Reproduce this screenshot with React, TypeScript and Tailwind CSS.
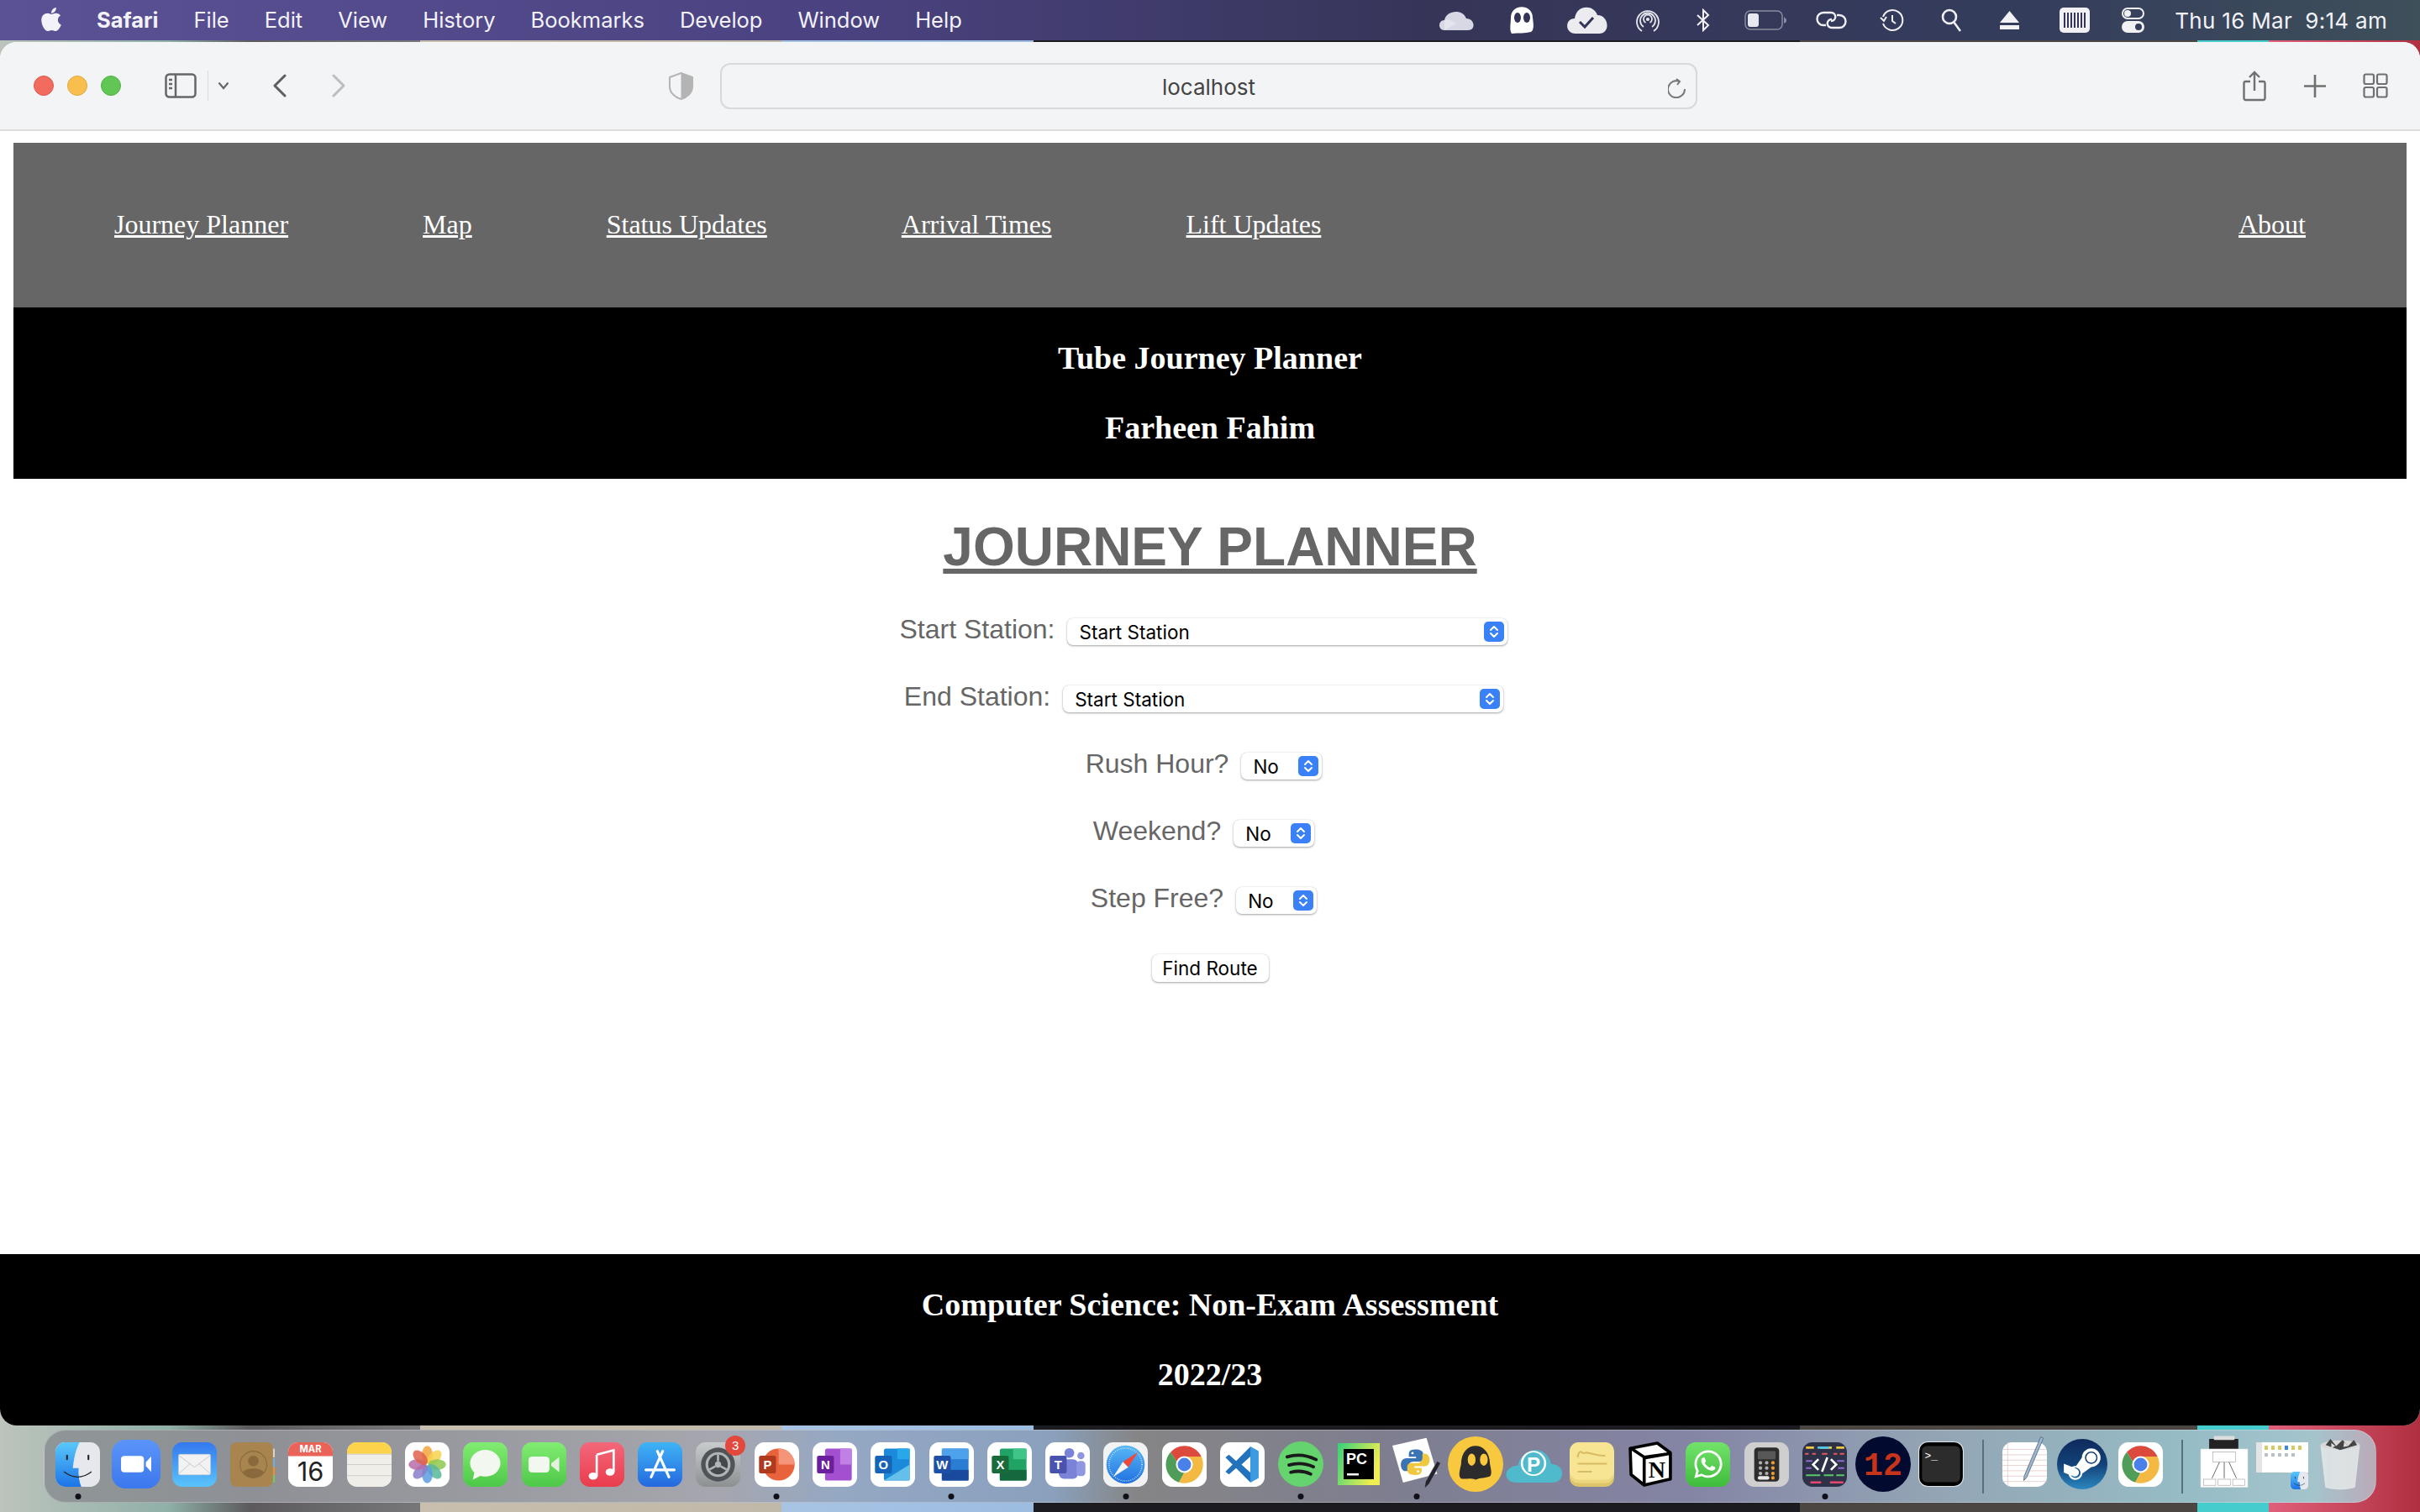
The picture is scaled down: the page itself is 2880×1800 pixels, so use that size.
import React from 'react';
import { FaApple, FaWhatsapp, FaSteamSymbol } from 'react-icons/fa';

const menuItems = ['File', 'Edit', 'View', 'History', 'Bookmarks', 'Develop', 'Window', 'Help'];
const navLinks = ['Journey Planner', 'Map', 'Status Updates', 'Arrival Times', 'Lift Updates'];

// Shared svg bits
const Grad = ({ id, a, b, x2 = 0, y2 = 1 }: { id: string; a: string; b: string; x2?: number; y2?: number }) => (
  <defs>
    <linearGradient id={id} x1="0" y1="0" x2={x2} y2={y2}>
      <stop offset="0" stopColor={a} />
      <stop offset="1" stopColor={b} />
    </linearGradient>
  </defs>
);

const Tile = ({ fill = '#fff' }: { fill?: string }) => <rect width="100" height="100" rx="22" fill={fill} />;

const Icon = ({ size = 53, h, children }: { size?: number; h?: number; children: React.ReactNode }) => (
  <svg width={size} height={h ?? size} viewBox="0 0 100 100" preserveAspectRatio="none" className="block overflow-visible">
    {children}
  </svg>
);

const Finder = ({ size = 53 }: { size?: number }) => (
  <Icon size={size}>
    <Grad id={`finder${size}`} a="#5ac8fa" b="#1c74e6" />
    <Tile fill="#e6e8ee" />
    <path d="M22 0H54C44 20 41 40 39 58H52C51 72 53 88 58 100H22A22 22 0 0 1 0 78V22A22 22 0 0 1 22 0Z" fill={`url(#finder${size})`} />
    <rect x="24" y="28" width="4" height="12" rx="2" fill="#222" />
    <rect x="72" y="28" width="4" height="12" rx="2" fill="#222" />
    <path d="M19 66Q50 90 81 66" fill="none" stroke="#222" strokeWidth="2.5" />
  </Icon>
);

const Chrome = () => (
  <Icon>
    <Tile />
    <path d="M50 8A42 42 0 0 1 88 32H50A18 18 0 0 0 33 44L19 22A42 42 0 0 1 50 8Z" fill="#db4a3c" />
    <path d="M19 22L33 44A18 18 0 0 0 50 68L38 90A42 42 0 0 1 19 22Z" fill="#4f9d58" />
    <path d="M88 32A42 42 0 0 1 38 90L50 68A18 18 0 0 0 66 42L50 32Z" fill="#f4b942" />
    <circle cx="50" cy="50" r="19" fill="#fff" />
    <circle cx="50" cy="50" r="15" fill="#4a80ea" />
  </Icon>
);

const Office = ({ letter, square, children }: { letter: string; square: string; children: React.ReactNode }) => (
  <Icon>
    <Tile />
    {children}
    <rect x="10" y="30" width="38" height="40" rx="4" fill={square} />
    <text x="29" y="60" textAnchor="middle" fontSize="28" fontWeight="700" fill="#fff" fontFamily="Liberation Sans, sans-serif">{letter}</text>
  </Icon>
);

const Pen = ({ x = 0, y = 0 }: { x?: number; y?: number }) => (
  <g transform={`translate(${x} ${y})`}>
    <path d="M44 0L50 3L12 92L6 98L7 88Z" fill="#9cb8d4" stroke="#506070" strokeWidth="1.5" />
  </g>
);

const SNAKE = 'M50 22C36 22 34 28 34 34V40H52V44H28C18 44 14 52 14 60C14 68 18 76 26 76H32V66C32 58 38 52 46 52H60C66 52 70 48 70 42V34C70 26 62 22 50 22Z';

const dockItems: { key: string; dot?: boolean; badge?: string; icon: React.ReactNode }[] = [
  { key: 'finder', dot: true, icon: <Finder /> },
  {
    key: 'zoom',
    icon: (
      <Icon size={58}>
        <Grad id="zoom" a="#5b94f8" b="#3c78ee" />
        <rect width="100" height="100" rx="28" fill="url(#zoom)" />
        <rect x="19" y="33" width="47" height="34" rx="7" fill="#fff" />
        <path d="M70 46L81 34V66L70 54Z" fill="#fff" />
      </Icon>
    ),
  },
  {
    key: 'mail',
    icon: (
      <Icon>
        <Grad id="mail" a="#3478ee" b="#5ac4fb" />
        <Tile fill="url(#mail)" />
        <rect x="14" y="27" width="72" height="46" rx="3" fill="#f2f2f2" stroke="#c8c8c8" />
        <path d="M14 29L50 56L86 29M14 71L40 48M86 71L60 48" fill="none" stroke="#bdbdbd" strokeWidth="1.5" />
      </Icon>
    ),
  },
  {
    key: 'contacts',
    icon: (
      <Icon>
        <rect x="88" y="14" width="12" height="20" rx="2" fill="#d8d4cc" />
        <rect x="88" y="36" width="12" height="20" rx="2" fill="#6ab0ec" />
        <rect x="88" y="56" width="12" height="18" rx="2" fill="#ee9030" />
        <rect x="88" y="74" width="12" height="16" rx="2" fill="#78c868" />
        <rect width="96" height="100" rx="14" fill="#a8844f" />
        <circle cx="52" cy="50" r="30" fill="none" stroke="#8a6a3c" strokeWidth="2" />
        <circle cx="52" cy="42" r="12" fill="#8a6a3c" />
        <path d="M28 68C34 56 70 56 76 68A30 30 0 0 1 28 68Z" fill="#8a6a3c" />
      </Icon>
    ),
  },
  {
    key: 'calendar',
    icon: (
      <Icon>
        <Tile />
        <path d="M22 0H78A22 22 0 0 1 100 22V31H0V22A22 22 0 0 1 22 0Z" fill="#ea6358" />
        <text x="50" y="23" textAnchor="middle" fontSize="21" fontWeight="700" fill="#fff" fontFamily="Inter, sans-serif">MAR</text>
        <text x="50" y="86" textAnchor="middle" fontSize="58" fill="#222" fontFamily="Inter, sans-serif">16</text>
      </Icon>
    ),
  },
  {
    key: 'notes',
    icon: (
      <Icon>
        <Tile fill="#f0eee8" />
        <path d="M22 0H78A22 22 0 0 1 100 22V26H0V22A22 22 0 0 1 22 0Z" fill="#fdd34c" />
        <path d="M0 27H100M0 50H100M0 75H100" stroke="#d0cec8" strokeWidth="2" />
      </Icon>
    ),
  },
  {
    key: 'photos',
    icon: (
      <Icon>
        <Tile />
        {['#f2a53c', '#f6d24c', '#8ec850', '#58b898', '#5a9ce0', '#8a7cc8', '#b86ca8', '#e0604c'].map((c, i) => (
          <ellipse key={c} cx="50" cy="28" rx="12" ry="20" fill={c} opacity="0.85" transform={`rotate(${i * 45} 50 50)`} />
        ))}
      </Icon>
    ),
  },
  {
    key: 'messages',
    icon: (
      <Icon>
        <Grad id="msg" a="#82ec72" b="#4dc848" />
        <Tile fill="url(#msg)" />
        <ellipse cx="50" cy="47" rx="34" ry="30" fill="#f2f8f0" />
        <path d="M26 66L22 84L42 74Z" fill="#f2f8f0" />
      </Icon>
    ),
  },
  {
    key: 'facetime',
    icon: (
      <Icon>
        <Grad id="ft" a="#82ec72" b="#4dc848" />
        <Tile fill="url(#ft)" />
        <rect x="15" y="32" width="47" height="36" rx="8" fill="#f2f8f0" />
        <path d="M66 47L84 33V67L66 53Z" fill="#e4f0e0" />
      </Icon>
    ),
  },
  {
    key: 'music',
    icon: (
      <Icon>
        <Grad id="music" a="#f2687a" b="#ea3c4c" />
        <Tile fill="url(#music)" />
        <path d="M38 28L76 18V66" fill="none" stroke="#fff" strokeWidth="5" />
        <path d="M38 28V76" fill="none" stroke="#fff" strokeWidth="5" />
        <ellipse cx="30" cy="76" rx="10" ry="8" fill="#fff" />
        <ellipse cx="68" cy="67" rx="10" ry="8" fill="#fff" />
      </Icon>
    ),
  },
  {
    key: 'appstore',
    icon: (
      <Icon>
        <Grad id="as" a="#3fb4f6" b="#2468de" />
        <Tile fill="url(#as)" />
        <path d="M56 20L30 78M44 20L70 78M18 62H82" fill="none" stroke="#fff" strokeWidth="6" strokeLinecap="round" />
      </Icon>
    ),
  },
  {
    key: 'prefs',
    badge: '3',
    icon: (
      <Icon>
        <Grad id="sp" a="#c8cccc" b="#8c9090" />
        <Tile fill="url(#sp)" />
        <circle cx="50" cy="50" r="38" fill="#505458" />
        <circle cx="50" cy="50" r="28" fill="#b0b4b4" />
        <circle cx="50" cy="50" r="22" fill="#44484c" />
        <circle cx="50" cy="50" r="7" fill="#b0b4b4" />
        <path d="M50 28V43M31 61L44 54M69 61L56 54" stroke="#b0b4b4" strokeWidth="5" />
      </Icon>
    ),
  },
  {
    key: 'powerpoint',
    dot: true,
    icon: (
      <Office letter="P" square="#b03a1e">
        <circle cx="54" cy="50" r="36" fill="#e8623c" />
        <path d="M54 14A36 36 0 0 1 90 50H54Z" fill="#f49478" />
      </Office>
    ),
  },
  {
    key: 'onenote',
    icon: (
      <Office letter="N" square="#6c1f9c">
        <rect x="28" y="14" width="60" height="72" rx="5" fill="#a24fd0" />
        <rect x="62" y="14" width="26" height="36" fill="#c080e4" />
      </Office>
    ),
  },
  {
    key: 'outlook',
    icon: (
      <Office letter="O" square="#1464b8">
        <rect x="30" y="14" width="58" height="72" rx="5" fill="#1c8ada" />
        <rect x="60" y="14" width="28" height="24" fill="#28a8e8" />
        <path d="M30 86L88 50V86Z" fill="#64c0ea" />
      </Office>
    ),
  },
  {
    key: 'word',
    dot: true,
    icon: (
      <Office letter="W" square="#1f50a8">
        <rect x="28" y="14" width="60" height="72" rx="5" fill="#2b7cd3" />
        <rect x="28" y="14" width="60" height="24" fill="#4ea2ec" />
        <rect x="28" y="62" width="60" height="24" fill="#1a4a9c" />
      </Office>
    ),
  },
  {
    key: 'excel',
    icon: (
      <Office letter="X" square="#1a6b3c">
        <rect x="28" y="14" width="60" height="72" rx="5" fill="#21a366" />
        <rect x="58" y="14" width="30" height="24" fill="#40c488" />
        <rect x="28" y="62" width="60" height="24" fill="#15683e" />
      </Office>
    ),
  },
  {
    key: 'teams',
    icon: (
      <Office letter="T" square="#4a52b0">
        <circle cx="54" cy="24" r="11" fill="#7b83d8" />
        <circle cx="80" cy="30" r="8" fill="#8f97e0" />
        <rect x="30" y="38" width="44" height="44" rx="12" fill="#7b83d8" />
        <rect x="70" y="42" width="20" height="34" rx="8" fill="#8f97e0" />
      </Office>
    ),
  },
  {
    key: 'safari',
    dot: true,
    icon: (
      <Icon>
        <Grad id="sf" a="#58b8f6" b="#1f70e0" />
        <Tile fill="#f2f2f2" />
        <circle cx="50" cy="50" r="43" fill="url(#sf)" />
        <circle cx="50" cy="50" r="37" fill="none" stroke="#d8ecfc" strokeWidth="3" strokeDasharray="1.5 3" />
        <path d="M78 22L44 44L56 56Z" fill="#f04838" />
        <path d="M22 78L44 44L56 56Z" fill="#f4f4f4" />
      </Icon>
    ),
  },
  { key: 'chrome', icon: <Chrome /> },
  {
    key: 'vscode',
    icon: (
      <Icon>
        <Tile />
        <path d="M68 10L86 20V80L68 90L36 58L20 72L12 66L28 50L12 34L20 28L36 42ZM68 32L48 50L68 68Z" fill="#2272bc" fillRule="evenodd" />
        <path d="M68 10L86 20V80L68 90Z" fill="#3c9ae0" />
      </Icon>
    ),
  },
  {
    key: 'spotify',
    dot: true,
    icon: (
      <Icon size={54}>
        <circle cx="50" cy="50" r="50" fill="#65d46e" />
        <path d="M20 34Q52 24 84 40M24 52Q52 44 78 56M28 68Q52 62 72 72" fill="none" stroke="#1a1a1a" strokeWidth="7" strokeLinecap="round" />
      </Icon>
    ),
  },
  {
    key: 'pycharm',
    icon: (
      <Icon size={50}>
        <Grad id="pc" a="#35d07a" b="#f0ee50" x2={1} y2={0.4} />
        <rect width="100" height="100" fill="url(#pc)" />
        <rect x="14" y="14" width="72" height="72" fill="#000" />
        <text x="20" y="50" fontSize="36" fontWeight="700" fill="#fff" fontFamily="Liberation Sans, sans-serif">PC</text>
        <rect x="22" y="72" width="28" height="5" fill="#fff" />
      </Icon>
    ),
  },
  {
    key: 'python',
    dot: true,
    icon: (
      <Icon size={58}>
        <path d="M0 12L70 -4L92 70L22 88Z" fill="#fff" />
        <g transform="translate(6 2) scale(0.82)">
          <path d={SNAKE} fill="#3b74b4" />
          <path d={SNAKE} fill="#f0c840" transform="rotate(180 50 54)" />
          <circle cx="43" cy="31" r="3" fill="#fff" />
          <circle cx="57" cy="77" r="3" fill="#fff" />
        </g>
        <path d="M92 44L99 48L76 90L66 100L68 86Z" fill="#23232e" stroke="#8c8c94" strokeWidth="1" />
      </Icon>
    ),
  },
  {
    key: 'cyberghost',
    icon: (
      <Icon size={66}>
        <circle cx="50" cy="50" r="50" fill="#f8c93e" />
        <path d="M24 50C24 6 76 6 76 50C78 60 80 68 76 72C66 76 60 74 50 78C40 74 30 78 24 76C18 72 22 60 24 50Z" fill="#2c2c2c" />
        <ellipse cx="43" cy="42" rx="7" ry="11" fill="#f8c93e" />
        <ellipse cx="65" cy="42" rx="7" ry="11" fill="#f8c93e" />
      </Icon>
    ),
  },
  {
    key: 'pcloud',
    icon: (
      <Icon size={66} h={44}>
        <path d="M20 100C-6 100 -6 56 22 54C26 10 72 -12 82 50C108 50 108 100 84 100Z" fill="#4fbacc" />
        <ellipse cx="50" cy="48" rx="21" ry="32" fill="none" stroke="#fff" strokeWidth="4" />
        <text x="50" y="70" textAnchor="middle" fontSize="54" fontWeight="700" fill="#fff" fontFamily="Liberation Sans, sans-serif" transform="translate(16 0) scale(0.68 1)">P</text>
      </Icon>
    ),
  },
  {
    key: 'stickies',
    icon: (
      <Icon>
        <rect y="12" width="100" height="88" rx="20" fill="#dcc46a" />
        <rect y="6" width="100" height="86" rx="20" fill="#ecd67e" />
        <rect width="100" height="84" rx="20" fill="#f8e594" />
        <path d="M18 34C22 10 28 28 34 24C42 20 56 32 80 30M18 48H84M18 66H50" fill="none" stroke="#d8bc64" strokeWidth="4" />
      </Icon>
    ),
  },
  {
    key: 'notion',
    icon: (
      <Icon size={52}>
        <path d="M4 14L66 2L96 24V84L36 98L6 74Z" fill="#fff" stroke="#000" strokeWidth="7" strokeLinejoin="round" />
        <path d="M6 14L36 34L94 26L36 36V96" fill="none" stroke="#000" strokeWidth="7" />
        <text x="65" y="80" textAnchor="middle" fontSize="54" fontWeight="700" fill="#000" fontFamily="Liberation Serif, serif">N</text>
      </Icon>
    ),
  },
  {
    key: 'whatsapp',
    icon: (
      <div className="flex h-[53px] w-[53px] items-center justify-center rounded-xl bg-linear-to-b from-[#72e36a] to-[#3fbc3c] text-[38px] text-white">
        <FaWhatsapp />
      </div>
    ),
  },
  {
    key: 'calculator',
    icon: (
      <Icon>
        <Tile fill="#cfcfcf" />
        <rect x="22" y="12" width="56" height="76" rx="8" fill="#2c2c2c" />
        <rect x="30" y="20" width="40" height="18" rx="2" fill="#585858" />
        {[46, 58, 70].map(y => (
          <g key={y}>
            <circle cx="36" cy={y} r="4" fill="#b0b0b0" />
            <circle cx="50" cy={y} r="4" fill="#b0b0b0" />
            <circle cx="64" cy={y} r="4" fill="#f09a30" />
          </g>
        ))}
        <rect x="30" y="76" width="26" height="8" rx="4" fill="#e8e8e8" />
        <circle cx="64" cy="80" r="4" fill="#f09a30" />
      </Icon>
    ),
  },
  {
    key: 'codeeditor',
    dot: true,
    icon: (
      <Icon>
        <Tile fill="#2e3248" />
        <path d="M8 12H26M40 12H66M76 12H94" stroke="#f0c840" strokeWidth="5" />
        <path d="M34 12H60" stroke="#4cc8f0" strokeWidth="5" />
        <path d="M6 26H14M22 26H30M44 26H56M70 26H78M84 26H94" stroke="#e85858" strokeWidth="4" />
        <path d="M8 42H22M78 42H94M8 58H20M80 58H94" stroke="#9068d0" strokeWidth="4" />
        <path d="M8 74H40M48 74H70M76 74H94" stroke="#58c868" strokeWidth="4" />
        <path d="M18 90H42M62 90H92" stroke="#e84870" strokeWidth="5" />
        <path d="M36 38L24 50L36 62M64 38L76 50L64 62M56 34L44 66" fill="none" stroke="#fff" strokeWidth="5" />
      </Icon>
    ),
  },
  {
    key: 'clock',
    icon: (
      <Icon size={66}>
        <circle cx="50" cy="50" r="50" fill="#020a30" />
        <text x="50" y="70" textAnchor="middle" fontSize="58" fontWeight="700" fill="#c8341a" fontFamily="Liberation Mono, monospace">12</text>
      </Icon>
    ),
  },
  {
    key: 'terminal',
    icon: (
      <Icon size={54}>
        <rect x="1" y="1" width="98" height="98" rx="20" fill="#000" stroke="#dfe6ea" strokeWidth="2" />
        <rect x="8" y="10" width="84" height="80" rx="10" fill="#2c2c2c" />
        <text x="14" y="38" fontSize="24" fill="#fff" fontFamily="Liberation Mono, monospace">&gt;_</text>
      </Icon>
    ),
  },
  { key: 'sep1', icon: null },
  {
    key: 'textedit',
    icon: (
      <Icon>
        <Tile />
        {[16, 28, 40, 52, 64, 76, 88].map(y => (
          <path key={y} d={`M0 ${y}H100`} stroke="#e4c8c8" strokeWidth="1.5" />
        ))}
        <path d="M12 0V100" stroke="#e4c8c8" strokeWidth="1.5" />
        <Pen x={42} y={-12} />
      </Icon>
    ),
  },
  {
    key: 'steam',
    icon: (
      <div className="flex h-[60px] w-[60px] items-center justify-center rounded-full bg-linear-to-b from-[#0e2a5c] via-[#124278] to-[#2c88c0] text-[50px] text-white">
        <FaSteamSymbol />
      </div>
    ),
  },
  { key: 'chrome2', icon: <Chrome /> },
  { key: 'sep2', icon: null },
  {
    key: 'stack1',
    icon: (
      <Icon size={56} h={60}>
        <rect x="18" y="0" width="62" height="30" fill="#222" />
        <rect x="28" y="-6" width="44" height="8" rx="2" fill="#ddd" />
        <rect x="0" y="20" width="100" height="76" fill="#fff" stroke="#ddd" />
        <rect x="26" y="26" width="48" height="20" fill="none" stroke="#999" />
        <path d="M40 46L24 78M50 46V78M60 46L76 78" stroke="#555" strokeWidth="1.5" />
        <rect x="6" y="80" width="26" height="12" fill="none" stroke="#999" />
        <rect x="37" y="80" width="26" height="12" fill="none" stroke="#999" />
        <rect x="68" y="80" width="26" height="12" fill="none" stroke="#999" />
      </Icon>
    ),
  },
  {
    key: 'stack2',
    icon: (
      <div className="relative h-[60px] w-[62px]">
        <svg width="62" height="36" viewBox="0 0 62 36" className="absolute top-[4px] left-0">
          <rect width="62" height="36" fill="#fff" />
          <rect width="7" height="36" fill="#e4e4e4" />
          {[10, 18, 26, 34, 42, 50].map(x => (
            <rect key={x} x={x} y="4" width="4" height="5" fill={x === 34 ? '#3c8ae0' : '#d8c860'} />
          ))}
          {[10, 18, 26, 34, 42].map(x => (
            <rect key={x} x={x} y="13" width="4" height="4" fill="#b8c0c8" />
          ))}
        </svg>
        <div className="absolute right-0 bottom-0">
          <Finder size={21} />
        </div>
      </div>
    ),
  },
  {
    key: 'trash',
    icon: (
      <Icon size={48} h={60}>
        <path d="M2 12L14 96Q50 104 86 96L98 12Z" fill="#e4e8e8" fillOpacity="0.85" stroke="#f4f4f4" />
        <ellipse cx="50" cy="12" rx="48" ry="9" fill="#d8d8d8" />
        <path d="M14 12L26 0L40 14L56 2L70 14L84 2L92 12L50 22Z" fill="#444" />
        <path d="M28 8L38 14L28 18ZM60 6L70 14L58 16Z" fill="#ddd" />
      </Icon>
    ),
  },
];

const Chevrons = () => (
  <svg width="24" height="24" viewBox="0 0 24 24" className="absolute top-1 right-1 rounded-[5px] bg-[#3a80f7]">
    <path d="M8 10L12 6L16 10M8 14L12 18L16 14" fill="none" stroke="#fff" strokeWidth="2" strokeLinecap="round" strokeLinejoin="round" />
  </svg>
);

const FormRow = ({ label, value, width }: { label: string; value: string; width: string }) => (
  <div className="flex h-8 items-center justify-center gap-[15px] pr-[15px]">
    <label className="-translate-y-[3px] text-[32px] leading-8 text-[#666]">{label}</label>
    <div className={`relative h-8 ${width} rounded-[7px] bg-white shadow-[0_1px_2.5px_rgba(0,0,0,0.35),0_0_1px_rgba(0,0,0,0.2)]`}>
      <select className="h-8 w-full appearance-none bg-transparent pl-[14px] font-['Inter',sans-serif] text-[22.5px] text-black outline-none">
        <option>{value}</option>
      </select>
      <Chevrons />
    </div>
  </div>
);

const BlackBand = ({ lines }: { lines: string[] }) => (
  <div className="flow-root bg-black text-center font-['Liberation_Serif',serif] text-white">
    {lines.map(line => (
      <h3 key={line} className="my-[38px] text-[38px] leading-[45px] font-bold">{line}</h3>
    ))}
  </div>
);

export default function App() {
  return (
    <div className="relative flex h-[1800px] w-[2880px] flex-col overflow-hidden bg-[linear-gradient(90deg,#bcc4bc_0,#8fb0a8_200px,#5c5a5c_297px,#77777a_500px,#c8bfae_500px,#c0b8a8_930px,#a8c4e4_930px,#9cbce0_1230px,#1c1c20_1230px,#1c1c20_2142px,#4c4642_2142px,#4c4642_2615px,#45cccc_2615px,#45cccc_2700px,#e0607c_2700px,#b03040_2880px)] font-['Liberation_Sans',sans-serif]">
      {/* Menu bar */}
      <div className="flex h-[48px] shrink-0 items-center bg-[linear-gradient(90deg,#5b5296_0,#4a4280_1000px,#363558_1700px,#343c5c_2400px,#3e505a_2880px)] pl-[45px] font-['Inter',sans-serif] text-[25.5px] text-[#f2f2f8]">
        <FaApple className="mb-[3px] text-[32px]" />
        <div className="ml-[38px] flex items-center gap-[42px]">
          <span className="font-bold">Safari</span>
          {menuItems.map(item => (
            <span key={item}>{item}</span>
          ))}
        </div>
        <div className="ml-auto flex items-center pr-[39px]">
          <svg width="42" height="28" viewBox="0 0 42 28">
            <path d="M6 26C-2 26 -2 14 6 14C8 2 28 0 32 12C42 12 44 26 34 26Z" fill="#d8d8e4" />
            <path d="M6 14C10 12 14 14 20 18L6 26Z" fill="#ededf2" opacity=".6" />
          </svg>
          <svg width="30" height="34" viewBox="0 0 30 34" className="ml-[41px]">
            <path d="M2 14C2 -3 28 -3 28 14C29 22 30 28 26 31C18 33 12 32 3 33C0 28 2 22 2 14Z" fill="#fff" />
            <ellipse cx="10" cy="14" rx="4" ry="6" fill="#343458" />
            <ellipse cx="21" cy="14" rx="4" ry="6" fill="#343458" />
          </svg>
          <svg width="48" height="32" viewBox="0 0 48 32" className="ml-[39px]">
            <path d="M10 32C-3 32 -3 14 9 14C11 -3 32 -3 36 10C50 10 52 32 38 32Z" fill="#ebebf0" />
            <path d="M15 18L21 24L31 13" fill="none" stroke="#343458" strokeWidth="3" />
          </svg>
          <svg width="28" height="30" viewBox="0 0 28 30" fill="none" stroke="#e8e8f0" strokeWidth="1.8" className="ml-[34px]">
            <path d="M7 28A13 13 0 1 1 21 28M9 23A9 9 0 1 1 19 23M11.5 18A5 5 0 1 1 16.5 18" />
            <circle cx="14" cy="14" r="1.2" fill="#e8e8f0" />
          </svg>
          <svg width="18" height="28" viewBox="0 0 18 28" fill="none" stroke="#f0f0f5" strokeWidth="2" className="ml-[43px]">
            <path d="M2 8L15 20L9 26V2L15 8L2 20" />
          </svg>
          <svg width="50" height="24" viewBox="0 0 50 24" className="ml-[40px]">
            <rect x="1" y="1" width="44" height="22" rx="6" fill="none" stroke="#8a8aa0" strokeWidth="1.5" />
            <rect x="4" y="4" width="13" height="16" rx="3" fill="#e8e8f0" />
            <path d="M47 8L50 11V14L47 16Z" fill="#8a8aa0" />
          </svg>
          <svg width="37" height="24" viewBox="0 0 37 24" fill="none" stroke="#f0f0f5" strokeWidth="2.4" className="ml-[35px]">
            <path d="M12 18H9A7 7 0 0 1 9 3H18C25 3 25 13 18 13" />
            <path d="M25 6H28A7 7 0 0 1 28 21H19C12 21 12 11 19 11" />
          </svg>
          <svg width="29" height="28" viewBox="0 0 29 28" fill="none" stroke="#f0f0f5" strokeWidth="2" className="ml-[39px]">
            <path d="M4 10A12 12 0 1 1 4 18M1 11L5 15L8 10M15 8V15L19 18" />
          </svg>
          <svg width="24" height="28" viewBox="0 0 24 28" fill="none" stroke="#f0f0f5" strokeWidth="2.6" className="ml-[44px]">
            <circle cx="10" cy="10" r="8" />
            <path d="M15 16L23 27" />
          </svg>
          <svg width="23" height="22" viewBox="0 0 23 22" fill="#f0f0f5" className="ml-[46px]">
            <path d="M11.5 0L23 14H0Z" />
            <rect y="17" width="23" height="5" />
          </svg>
          <svg width="36" height="30" viewBox="0 0 36 30" className="ml-[48px]">
            <rect width="36" height="30" rx="5" fill="#f0f0f5" />
            <path d="M6 6V24M10 6V24M14 6V24M18 6V24M22 6V24M26 6V24M30 6V24" stroke="#343458" strokeWidth="2" />
          </svg>
          <svg width="27" height="30" viewBox="0 0 27 30" className="ml-[38px]" fill="none">
            <rect x="1" y="1" width="25" height="12" rx="6" stroke="#f0f0f5" strokeWidth="2" />
            <circle cx="7" cy="7" r="4" fill="#f0f0f5" />
            <rect y="16" width="27" height="14" rx="7" fill="#f0f0f5" />
            <circle cx="20" cy="23" r="4" fill="#343c5c" />
          </svg>
          <span className="ml-[36px] text-[26px] tracking-[0.3px]">Thu 16 Mar&nbsp; 9:14 am</span>
        </div>
      </div>

      {/* Browser window */}
      <div className="mt-[2px] flex h-[1647px] shrink-0 flex-col overflow-hidden rounded-[20px] bg-white">
        <div className="flex h-[106px] shrink-0 items-center border-b-2 border-[#dcdcdc] bg-[#f3f4f6] pl-[40px]">
          <div className="flex gap-4">
            <span className="h-6 w-6 rounded-full border border-[#e0584c] bg-[#f26b5f]" />
            <span className="h-6 w-6 rounded-full border border-[#e0a840] bg-[#f8bf4f]" />
            <span className="h-6 w-6 rounded-full border border-[#50b044] bg-[#62c655]" />
          </div>
          <svg width="38" height="30" viewBox="0 0 38 30" fill="none" stroke="#666" strokeWidth="2.5" className="ml-[52px]">
            <rect x="1.5" y="1.5" width="35" height="27" rx="4" />
            <path d="M13 1.5V28.5M5 8H9M5 13H9M5 18H9" />
          </svg>
          <span className="ml-[13px] h-[36px] w-px bg-[#dcdcdc]" />
          <svg width="14" height="10" viewBox="0 0 14 10" fill="none" stroke="#666" strokeWidth="2.2" className="ml-[11px]">
            <path d="M1.5 1.5L7 8L12.5 1.5" />
          </svg>
          <svg width="18" height="28" viewBox="0 0 18 28" fill="none" stroke="#5e5e5e" strokeWidth="3" strokeLinecap="round" strokeLinejoin="round" className="ml-[51px]">
            <path d="M15 2L3 14L15 26" />
          </svg>
          <svg width="18" height="28" viewBox="0 0 18 28" fill="none" stroke="#bdbdbd" strokeWidth="3" strokeLinecap="round" strokeLinejoin="round" className="ml-[52px]">
            <path d="M3 2L15 14L3 26" />
          </svg>
          <svg width="29" height="33" viewBox="0 0 29 33" className="ml-[384px]">
            <path d="M14.5 1L28 6V17C28 25 21 30 14.5 32C8 30 1 25 1 17V6Z" fill="#f3f4f6" stroke="#b4b4b4" strokeWidth="2" />
            <path d="M14.5 1L28 6V17C28 25 21 30 14.5 32Z" fill="#b4b4b4" />
          </svg>
          <div className="relative ml-[32px] flex h-[55px] w-[1163px] items-center justify-center rounded-[12px] border-2 border-[#d9d9d9] bg-[#f3f4f6] pt-[2px] font-['Inter',sans-serif] text-[26px] text-[#444]">
            localhost
            <svg width="22" height="24" viewBox="0 0 22 24" fill="none" stroke="#777" strokeWidth="2" className="absolute top-[16px] right-[11px]">
              <path d="M14 4A10 10 0 1 0 20 13M10 1L14 4L11 8" />
            </svg>
          </div>
          <svg width="28" height="37" viewBox="0 0 28 37" fill="none" stroke="#707070" strokeWidth="2.4" className="ml-[649px]">
            <path d="M9 13H3A2 2 0 0 0 1.5 15V33A2 2 0 0 0 3 35H25A2 2 0 0 0 26.5 33V15A2 2 0 0 0 25 13H19M14 24V2M8 8L14 2L20 8" />
          </svg>
          <svg width="26" height="27" viewBox="0 0 26 27" stroke="#707070" strokeWidth="2.6" className="ml-[45px]">
            <path d="M13 0V27M0 13.5H26" />
          </svg>
          <svg width="30" height="30" viewBox="0 0 30 30" fill="none" stroke="#707070" strokeWidth="2.2" className="ml-[44px]">
            <rect x="1.5" y="1.5" width="11.5" height="11.5" rx="2" />
            <rect x="17" y="1.5" width="11.5" height="11.5" rx="2" />
            <rect x="1.5" y="17" width="11.5" height="11.5" rx="2" />
            <rect x="17" y="17" width="11.5" height="11.5" rx="2" />
          </svg>
        </div>

        {/* Page */}
        <div className="flex min-h-0 flex-1 flex-col">
          <div className="mx-4 mt-[14px] font-['Liberation_Serif',serif]">
            <nav className="flex h-[196px] items-center bg-[#666] px-[120px] pb-[2px] text-[32px] text-white">
              <div className="flex gap-[160px]">
                {navLinks.map(link => (
                  <a key={link} href="#" className="underline">{link}</a>
                ))}
              </div>
              <a href="#" className="ml-auto underline">About</a>
            </nav>
            <BlackBand lines={['Tube Journey Planner', 'Farheen Fahim']} />
          </div>

          <main className="flex-1">
            <h1 className="mt-[44px] text-center text-[64px] leading-[74px] font-bold text-[#666] underline">JOURNEY PLANNER</h1>
            <div className="mt-[48px] flex flex-col gap-12">
              <FormRow label="Start Station:" value="Start Station" width="w-[524px]" />
              <FormRow label="End Station:" value="Start Station" width="w-[524px]" />
              <FormRow label="Rush Hour?" value="No" width="w-[96px]" />
              <FormRow label="Weekend?" value="No" width="w-[96px]" />
              <FormRow label="Step Free?" value="No" width="w-[96px]" />
              <div className="flex justify-center">
                <button className="h-[33px] w-[139px] rounded-[7px] bg-white font-['Inter',sans-serif] text-[22.5px] text-black shadow-[0_1px_2.5px_rgba(0,0,0,0.35),0_0_1px_rgba(0,0,0,0.2)]">Find Route</button>
              </div>
            </div>
          </main>

          <BlackBand lines={['Computer Science: Non-Exam Assessment', '2022/23']} />
        </div>
      </div>

      {/* Dock */}
      <div className="absolute top-[1702px] left-[52px] flex h-[87px] w-[2776px] items-center rounded-[26px] border border-white/25 bg-[linear-gradient(90deg,#8f9697_0,#8e9095_250px,#a6a6ae_800px,#94a8c4_950px,#8aa0bc_1200px,#858586_1300px,#7e7e90_1600px,#8484a4_1950px,#93a5b5_2250px,#96bcc6_2550px,#a4c4cc_2700px,#bbaab8_2776px)] pl-[5px]">
        {dockItems.map(item =>
          item.icon === null ? (
            <div key={item.key} className="flex h-full w-[29.6px] items-center justify-center">
              <span className="h-16 w-[2px] bg-[#56707e]" />
            </div>
          ) : (
            <div key={item.key} className="relative flex h-full w-[69.3px] items-center justify-center pb-[5px]">
              {item.icon}
              {item.badge && (
                <span className="absolute top-[6px] left-[43px] flex h-6 w-6 items-center justify-center rounded-full bg-[#e2483c] text-[15px] text-white">{item.badge}</span>
              )}
              {item.dot && <span className="absolute bottom-[3px] left-1/2 h-[7px] w-[7px] -translate-x-1/2 rounded-full bg-[#101018]" />}
            </div>
          ),
        )}
      </div>
    </div>
  );
}
